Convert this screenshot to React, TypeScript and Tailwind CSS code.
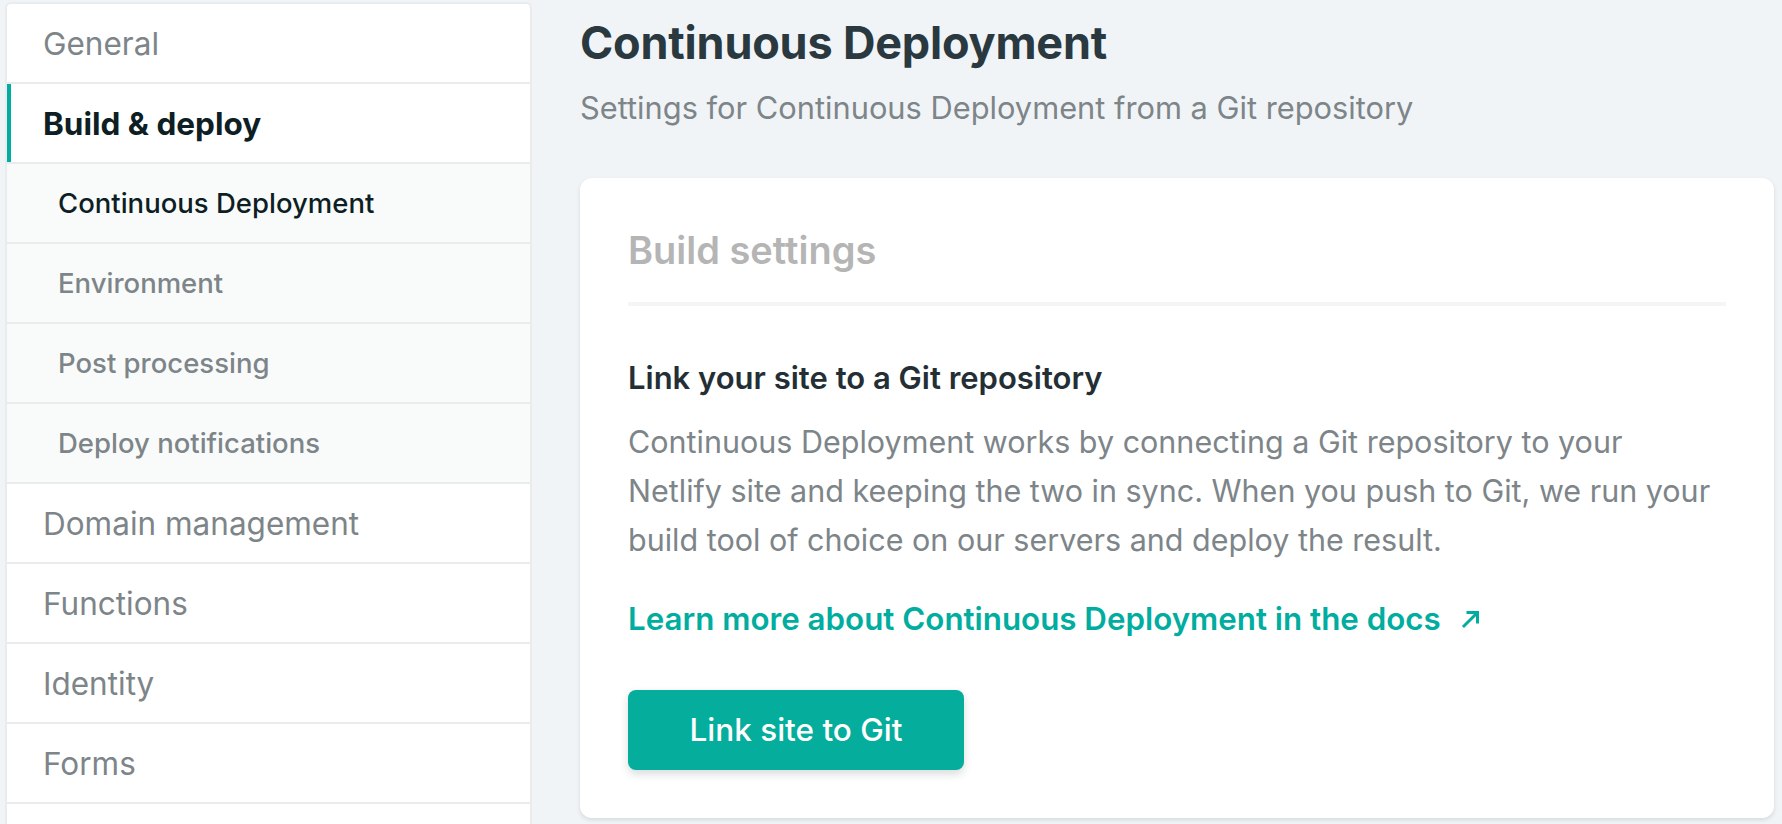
import React from 'react'

type NavItem = { label: string; level: 1 | 2; active?: boolean; current?: boolean }

const nav: NavItem[] = [
  { label: 'General', level: 1 },
  { label: 'Build & deploy', level: 1, active: true },
  { label: 'Continuous Deployment', level: 2, current: true },
  { label: 'Environment', level: 2 },
  { label: 'Post processing', level: 2 },
  { label: 'Deploy notifications', level: 2 },
  { label: 'Domain management', level: 1 },
  { label: 'Functions', level: 1 },
  { label: 'Identity', level: 1 },
  { label: 'Forms', level: 1 },
]

function Sidebar() {
  return (
    <nav className="mt-[2px] ml-[5px] w-[527px] shrink-0 self-start overflow-hidden rounded-t-[6px] border-2 border-[#e9ebed] bg-white">
      {nav.map((item) => {
        if (item.level === 2) {
          return (
            <div
              key={item.label}
              className={`flex h-[80px] items-center border-b-2 border-[#e9ebed] bg-[#f9fafa] pt-[2px] pl-[51px] text-[27.5px] font-medium ${
                item.current ? 'text-[#0e1e25]' : 'text-[#7d8589]'
              }`}
            >
              {item.label}
            </div>
          )
        }
        return (
          <div
            key={item.label}
            className={`relative flex h-[80px] items-center border-b-2 border-[#e9ebed] pt-[2px] pl-[36px] text-[31.5px] ${
              item.active ? 'font-bold text-[#0e1e25]' : 'text-[#7d8589]'
            }`}
          >
            {item.active ? <span className="absolute top-0 bottom-0 left-0 w-[4px] bg-[#00ad9f]" /> : null}
            {item.label}
          </div>
        )
      })}
      {/* next row, scrolled out of view */}
      <div className="h-[80px]" />
    </nav>
  )
}

function ArrowIcon() {
  return (
    <svg className="ml-[20px] h-[20px] w-[20px]" viewBox="0 0 20 20" fill="none" stroke="#00ad9f" strokeWidth="3" strokeLinecap="square">
      <path d="M3 17L16 4" />
      <path d="M7 3.5h9.5V13" />
    </svg>
  )
}

export default function App() {
  return (
    <div
      className="flex h-[824px] w-full overflow-hidden bg-[#f1f4f7]"
      style={{ fontFamily: 'Inter, "Noto Sans", sans-serif' }}
    >
      <Sidebar />

      <main className="ml-[48px] mr-[8px] flex-1 pt-[14px]">
        <h1 className="text-[45px] leading-[58px] font-bold tracking-[-0.2px] text-[#2a3940]">Continuous Deployment</h1>
        <p className="mt-[16px] text-[30.8px] leading-[40px] text-[#7d8589]">
          Settings for Continuous Deployment from a Git repository
        </p>

        <section className="mt-[50px] rounded-[12px] bg-white px-[48px] pt-[48px] pb-[48px] shadow-[0_2px_4px_rgba(14,30,37,0.12)]">
          <div className="border-b-4 border-[#f4f5f6] pb-[28px]">
            <h2 className="text-[38px] leading-[48px] font-semibold text-[#b5b5b5]">Build settings</h2>
          </div>

          <h3 className="mt-[48px] text-[31px] leading-[48px] font-semibold text-[#242f35]">
            Link your site to a Git repository
          </h3>
          <p className="mt-[15px] text-[30.5px] leading-[49px] text-[#7d8589]">
            Continuous Deployment works by connecting a Git repository to your
            <br />
            Netlify site and keeping the two in sync. When you push to Git, we run your build tool of choice on our servers
            and deploy the result.
          </p>

          <a className="mt-[31px] flex h-[48px] items-center text-[31.3px] font-semibold text-[#00ad9f]" href="#">
            Learn more about Continuous Deployment in the docs
            <ArrowIcon />
          </a>

          <button className="mt-[47px] flex h-[80px] w-[336px] items-center justify-center rounded-[8px] bg-[#05ad9c] text-[31.5px] font-medium text-white shadow-[0_4px_8px_rgba(14,30,37,0.16)]">
            Link site to Git
          </button>
        </section>
      </main>
    </div>
  )
}
